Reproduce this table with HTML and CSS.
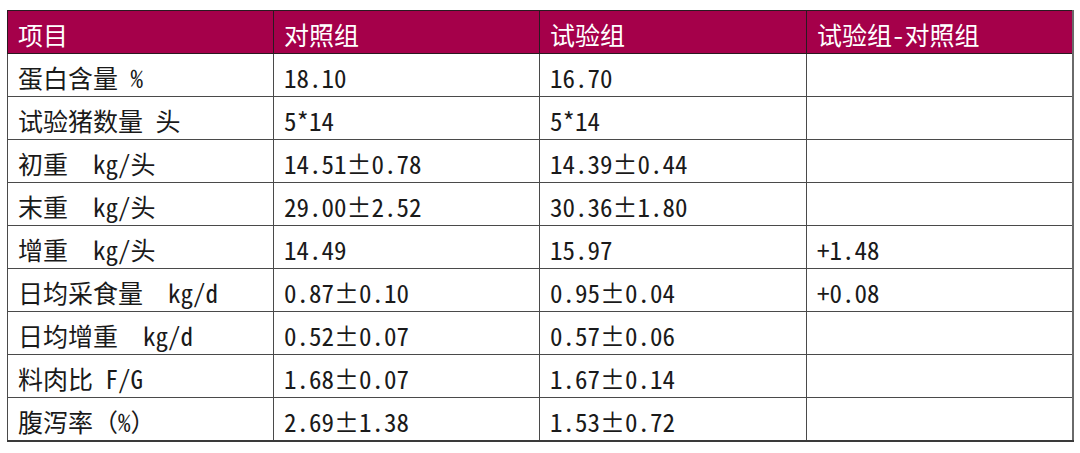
FILE: index.html
```html
<!DOCTYPE html>
<html lang="zh-CN">
<head>
<meta charset="utf-8">
<link rel="stylesheet" href="styles.css">
</head>
<body>
<table class="data">
  <colgroup>
    <col class="c1"><col class="c2"><col class="c3"><col class="c4">
  </colgroup>
  <thead>
    <tr><th>项目</th><th>对照组</th><th>试验组</th><th>试验组-对照组</th></tr>
  </thead>
  <tbody>
    <tr><td>蛋白含量 %</td><td>18.10</td><td>16.70</td><td></td></tr>
    <tr><td>试验猪数量 头</td><td>5*14</td><td>5*14</td><td></td></tr>
    <tr><td>初重&nbsp;&nbsp;kg/头</td><td>14.51±0.78</td><td>14.39±0.44</td><td></td></tr>
    <tr><td>末重&nbsp;&nbsp;kg/头</td><td>29.00±2.52</td><td>30.36±1.80</td><td></td></tr>
    <tr><td>增重&nbsp;&nbsp;kg/头</td><td>14.49</td><td>15.97</td><td>+1.48</td></tr>
    <tr><td>日均采食量&nbsp;&nbsp;kg/d</td><td>0.87±0.10</td><td>0.95±0.04</td><td>+0.08</td></tr>
    <tr><td>日均增重&nbsp;&nbsp;kg/d</td><td>0.52±0.07</td><td>0.57±0.06</td><td></td></tr>
    <tr><td>料肉比 F/G</td><td>1.68±0.07</td><td>1.67±0.14</td><td></td></tr>
    <tr><td>腹泻率（%）</td><td>2.69±1.38</td><td>1.53±0.72</td><td></td></tr>
  </tbody>
</table>
</body>
</html>
```

FILE: styles.css
```css
html, body {
  margin: 0;
  background: #ffffff;
}
body {
  padding: 10px 0 0 7px;
  font-family: "Noto Sans Mono CJK SC", "Noto Sans CJK SC", "DejaVu Sans Mono", monospace;
  color: #1a1a1a;
}
.data {
  border-collapse: collapse;
  table-layout: fixed;
  width: 1065px;
}
.c1 { width: 266px; }
.c2 { width: 266px; }
.c3 { width: 267px; }
.c4 { width: 266px; }
.data th,
.data td {
  height: 43px;
  box-sizing: border-box;
  padding: 4px 10px 0 10px;
  text-align: left;
  font-size: 25px;
  line-height: 30px;
  white-space: nowrap;
  vertical-align: middle;
}
.data th {
  background: #a5004a;
  color: #ffffff;
  font-weight: normal;
  border: 1px solid #2a1a20;
}
.data td {
  border: 1.5px solid #4a4a4a;
}
.data tr td:last-child,
.data tr th:last-child {
  border-right: 2px solid #6a6a6a;
}
.data tbody tr:last-child td {
  border-bottom: 2px solid #3a3a3a;
}
```
